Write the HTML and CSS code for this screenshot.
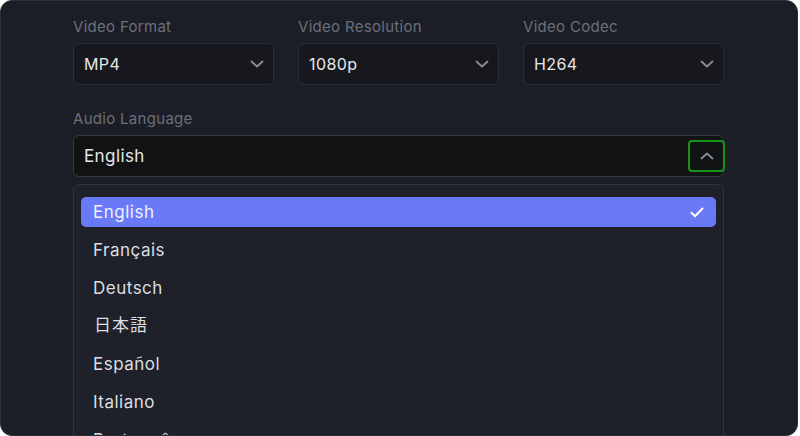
FILE: index.html
```html
<!DOCTYPE html>
<html lang="en">
<head>
<meta charset="utf-8">
<link rel="stylesheet" href="styles.css">
</head>
<body>
<div class="panel">
  <div class="row">
    <div class="field">
      <div class="label">Video Format</div>
      <div class="select"><span>MP4</span>
        <svg class="chev" width="14" height="8" viewBox="0 0 14 8"><path d="M1.5 1.5 L7 6.5 L12.5 1.5" fill="none" stroke="currentColor" stroke-width="1.8" stroke-linecap="round" stroke-linejoin="round"/></svg>
      </div>
    </div>
    <div class="field">
      <div class="label">Video Resolution</div>
      <div class="select"><span>1080p</span>
        <svg class="chev" width="14" height="8" viewBox="0 0 14 8"><path d="M1.5 1.5 L7 6.5 L12.5 1.5" fill="none" stroke="currentColor" stroke-width="1.8" stroke-linecap="round" stroke-linejoin="round"/></svg>
      </div>
    </div>
    <div class="field">
      <div class="label">Video Codec</div>
      <div class="select"><span>H264</span>
        <svg class="chev" width="14" height="8" viewBox="0 0 14 8"><path d="M1.5 1.5 L7 6.5 L12.5 1.5" fill="none" stroke="currentColor" stroke-width="1.8" stroke-linecap="round" stroke-linejoin="round"/></svg>
      </div>
    </div>
  </div>
  <div class="field audio">
    <div class="label">Audio Language</div>
    <div class="select open"><span>English</span>
      <div class="toggle">
        <svg width="14" height="8" viewBox="0 0 14 8"><path d="M1.5 6.5 L7 1.5 L12.5 6.5" fill="none" stroke="currentColor" stroke-width="1.8" stroke-linecap="round" stroke-linejoin="round"/></svg>
      </div>
    </div>
    <ul class="list">
      <li class="item selected"><span>English</span>
        <svg width="14" height="11" viewBox="0 0 14 11"><path d="M1.5 5.8 L5 9.2 L12.5 1.5" fill="none" stroke="currentColor" stroke-width="2" stroke-linecap="round" stroke-linejoin="round"/></svg>
      </li>
      <li class="item">Français</li>
      <li class="item">Deutsch</li>
      <li class="item cjk">日本語</li>
      <li class="item">Español</li>
      <li class="item">Italiano</li>
      <li class="item">Português</li>
      <li class="item">Русский</li>
    </ul>
  </div>
</div>
</body>
</html>
```
FILE: styles.css
```css
html, body {
  margin: 0;
  padding: 0;
  background: #ffffff;
}
body {
  font-family: Inter, "Noto Sans", "Noto Sans CJK JP", sans-serif;
}
.panel {
  width: 798px;
  height: 436px;
  box-sizing: border-box;
  border: 1px solid #2c3038;
  border-radius: 12px;
  background: #1b1e26;
  padding: 16px 73px 0 72px;
  overflow: hidden;
}
.row {
  display: grid;
  grid-template-columns: repeat(3, 1fr);
  gap: 24px;
}
.label {
  font-size: 15px;
  line-height: 20px;
  color: #6b707b;
  margin-bottom: 6px;
  letter-spacing: 0.3px;
}
.select {
  height: 42px;
  box-sizing: border-box;
  border: 1px solid #2a2d35;
  border-radius: 6px;
  background: #16181d;
  display: flex;
  align-items: center;
  justify-content: space-between;
  padding: 0 9px 0 10px;
  font-size: 16px;
  color: #e6e7ea;
  letter-spacing: 0.4px;
}
.chev {
  color: #8a8e97;
}
.audio {
  margin-top: 24px;
}
.select.open {
  background: #111214;
  border-color: #363a42;
  font-size: 17px;
  padding-right: 0;
}
.toggle {
  width: 37px;
  height: 32px;
  box-sizing: border-box;
  border: 2px solid #15921a;
  border-radius: 4px;
  display: flex;
  align-items: center;
  justify-content: center;
  color: #8a8e97;
  margin-right: -2px;
}
.list {
  list-style: none;
  margin: 7px 0 0 0;
  padding: 12px 7px;
  border: 1px solid #30343c;
  border-radius: 6px;
  background: #1e2129;
  display: flex;
  flex-direction: column;
  gap: 8px;
}
.item {
  height: 30px;
  box-sizing: border-box;
  display: flex;
  align-items: center;
  justify-content: space-between;
  padding: 0 12px;
  font-size: 17px;
  color: #dcdee3;
  border-radius: 5px;
  letter-spacing: 0.5px;
}
.item.cjk {
  font-family: "Noto Sans CJK JP", sans-serif;
  padding-bottom: 6px;
  padding-left: 13px;
  letter-spacing: 1px;
}
.item.selected {
  background: #6a7af7;
  color: #eef0ff;
}
.item.selected svg {
  color: #ffffff;
}
```
